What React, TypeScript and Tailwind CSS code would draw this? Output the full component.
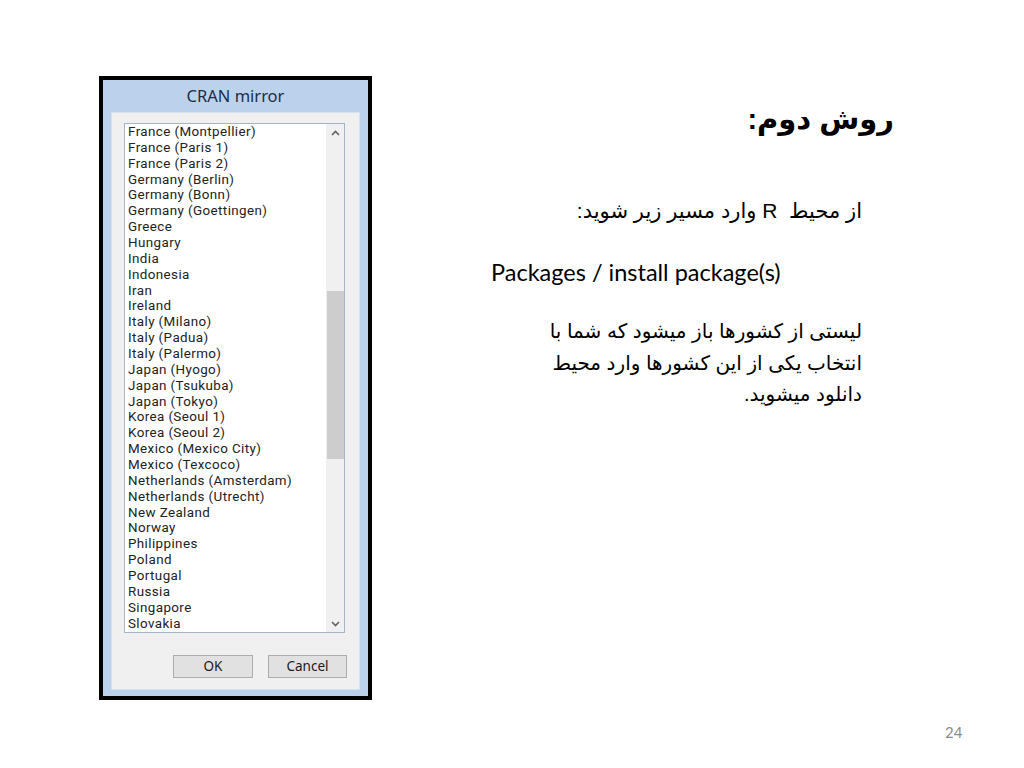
import React from "react";

const items = [
  "France (Montpellier)",
  "France (Paris 1)",
  "France (Paris 2)",
  "Germany (Berlin)",
  "Germany (Bonn)",
  "Germany (Goettingen)",
  "Greece",
  "Hungary",
  "India",
  "Indonesia",
  "Iran",
  "Ireland",
  "Italy (Milano)",
  "Italy (Padua)",
  "Italy (Palermo)",
  "Japan (Hyogo)",
  "Japan (Tsukuba)",
  "Japan (Tokyo)",
  "Korea (Seoul 1)",
  "Korea (Seoul 2)",
  "Mexico (Mexico City)",
  "Mexico (Texcoco)",
  "Netherlands (Amsterdam)",
  "Netherlands (Utrecht)",
  "New Zealand",
  "Norway",
  "Philippines",
  "Poland",
  "Portugal",
  "Russia",
  "Singapore",
  "Slovakia",
];

const uiFont = { fontFamily: '"Noto Sans", "Open Sans", sans-serif' };
const listFont = { fontFamily: 'Roboto, "Noto Sans", sans-serif' };
const arFont = { fontFamily: '"Liberation Sans", "DejaVu Sans", sans-serif' };

function Dialog() {
  return (
    <div className="ml-[99px] mt-[76px] w-[273px] h-[624px] border-4 border-black bg-[#bcd2ec] flex flex-col" style={uiFont}>
      <div className="h-[32px] flex items-center justify-center text-[16.5px] text-[#1e2d44]">CRAN mirror</div>
      <div className="mx-[8px] mb-[6px] flex-1 bg-[#f0f0f0] border border-[#d6e2f0] flex flex-col pl-[12px] pr-[12px] pt-[10px] pb-[11px]">
        <div className="w-[221px] h-[510px] border border-[#a6b4c8] bg-white flex">
          <div className="flex-1 pl-[3px] flex flex-col" style={listFont}>
            {items.map((t) => (
              <div key={t} className="h-[15.87px] leading-[15.87px] text-[13.4px] tracking-[0.4px] text-[#222222] whitespace-nowrap">
                {t}
              </div>
            ))}
          </div>
          <div className="w-[18px] bg-[#f0f0f0] flex flex-col items-center">
            <div className="h-[17px] flex items-center justify-center">
              <svg width="9" height="6" viewBox="0 0 9 6"><path d="M1 5 L4.5 1.5 L8 5" stroke="#606060" strokeWidth="1.6" fill="none" /></svg>
            </div>
            <div className="h-[150px]" />
            <div className="w-[17px] h-[168px] bg-[#cdcdcd]" />
            <div className="flex-1" />
            <div className="h-[17px] flex items-center justify-center">
              <svg width="9" height="6" viewBox="0 0 9 6"><path d="M1 1 L4.5 4.5 L8 1" stroke="#606060" strokeWidth="1.6" fill="none" /></svg>
            </div>
          </div>
        </div>
        <div className="flex-1" />
        <div className="flex gap-[15px] pl-[49px]">
          <button className="w-[81px] h-[23px] bg-[#e1e1e1] border border-[#adadad] text-[13.5px] text-[#1a1a1a] flex items-center justify-center">OK</button>
          <button className="w-[80px] h-[23px] bg-[#e1e1e1] border border-[#adadad] text-[13.5px] text-[#1a1a1a] flex items-center justify-center">Cancel</button>
        </div>
      </div>
    </div>
  );
}

export default function App() {
  return (
    <div className="w-[1024px] h-[768px] bg-white flex overflow-hidden">
      <Dialog />
      <div className="flex-1 flex flex-col">
        <div dir="rtl" className="mt-[97px] pr-[130px] text-[29px] font-bold leading-[44px] text-black" style={arFont}>
          روش دوم:
        </div>
        <div dir="rtl" className="mt-[56px] pr-[162px] text-[21px] leading-[28px] text-black" style={arFont}>
          از محیط&nbsp; R وارد مسیر زیر شوید:
        </div>
        <div className="mt-[32px] pl-[119px] text-[23.5px] leading-[30px] text-black" style={{ fontFamily: 'Lato, "Open Sans", sans-serif' }}>
          Packages / install package(s)
        </div>
        <div dir="rtl" className="mt-[29px] pr-[162px] text-[20px] leading-[31.5px] text-black" style={arFont}>
          <div>لیستی از کشورها باز میشود که شما با</div>
          <div>انتخاب یکی از این کشورها وارد محیط</div>
          <div>دانلود میشوید.</div>
        </div>
        <div className="mt-auto mb-[25px] pl-[573px] text-[15px] text-[#8b8b8b]" style={{ fontFamily: 'Lato, sans-serif' }}>
          24
        </div>
      </div>
    </div>
  );
}
